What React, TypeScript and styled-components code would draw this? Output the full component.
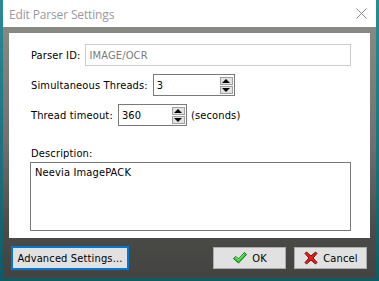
import { createGlobalStyle } from "styled-components";
import styled from "styled-components";

const GlobalStyle = createGlobalStyle`
  html, body {
    margin: 0;
    padding: 0;
  }
  body {
    background: #17707e;
    font-family: "DejaVu Sans Condensed", "DejaVu Sans", sans-serif;
  }
`;

const Desktop = styled.div`
  width: 379px;
  height: 281px;
  box-sizing: border-box;
  padding: 0 3px 3px 3px;
  background: linear-gradient(180deg, #2b8a98 0%, #1a6f7c 60%, #0f5a66 100%);
  overflow: hidden;
`;

const Window = styled.div`
  display: flex;
  flex-direction: column;
  width: 373px;
  height: 278px;
`;

const TitleBar = styled.div`
  height: 27px;
  flex-shrink: 0;
  background: #ffffff;
  display: flex;
  align-items: center;
  justify-content: space-between;
  padding: 0 9px 0 6px;
`;

const Title = styled.span`
  font-family: "Open Sans", "Noto Sans", sans-serif;
  font-size: 12px;
  color: #9a9a9a;
  letter-spacing: -0.15px;
  margin-top: 2px;
`;

const CloseIcon = styled.svg`
  width: 11px;
  height: 11px;
`;

const Frame = styled.div`
  flex: 1;
  display: flex;
  flex-direction: column;
  padding: 6px 6px 0 6px;
  background: linear-gradient(180deg, #898984 0%, #71716d 45%, #4b4b48 80%, #434341 100%);
`;

const Panel = styled.div`
  height: 205px;
  box-sizing: border-box;
  background: #ffffff;
  padding: 11px 19px 0 22px;
  display: flex;
  flex-direction: column;
`;

const FieldRow = styled.div<{ $mt?: number }>`
  display: flex;
  align-items: center;
  gap: 5px;
  height: 22px;
  margin-top: ${({ $mt }) => $mt ?? 0}px;
  font-size: 11px;
  letter-spacing: 0.15px;
  color: #000;
`;

const Label = styled.span`
  white-space: nowrap;
`;

const TextInput = styled.div<{ $disabled?: boolean }>`
  flex: 1;
  height: 22px;
  box-sizing: border-box;
  border: 1px solid ${({ $disabled }) => ($disabled ? "#cccccc" : "#7a7a7a")};
  color: ${({ $disabled }) => ($disabled ? "#7b7b7b" : "#000")};
  display: flex;
  align-items: center;
  padding-left: 3px;
  font-size: 11px;
`;

const SpinBox = styled.div<{ $w: number }>`
  width: ${({ $w }) => $w}px;
  height: 22px;
  box-sizing: border-box;
  border: 1px solid #7a7a7a;
  display: flex;
  align-items: center;
  justify-content: space-between;
  padding: 0 1px 0 3px;
  font-size: 11px;
`;

const SpinButtons = styled.div`
  display: flex;
  flex-direction: column;
  gap: 1px;
`;

const SpinButton = styled.div`
  width: 13px;
  height: 8px;
  box-sizing: border-box;
  background: #e3e3e3;
  border: 1px solid #a0a0a0;
  display: flex;
  align-items: center;
  justify-content: center;
`;

const Arrow = styled.span<{ $up?: boolean }>`
  width: 0;
  height: 0;
  border-left: 4px solid transparent;
  border-right: 4px solid transparent;
  ${({ $up }) =>
    $up ? "border-bottom: 4px solid #000;" : "border-top: 4px solid #000;"}
`;

const Units = styled.span`
  margin-left: -1px;
`;

const DescLabel = styled.div`
  margin-top: 21px;
  font-size: 11px;
  letter-spacing: 0.15px;
  height: 14px;
`;

const TextArea = styled.div`
  margin-top: 1px;
  margin-left: -1px;
  height: 69px;
  box-sizing: border-box;
  border: 1px solid #7a7a7a;
  padding: 3px 4px;
  font-size: 11px;
  letter-spacing: 0.15px;
`;

const Footer = styled.div`
  flex: 1;
  display: flex;
  align-items: center;
  padding: 0 3px 0 2px;
  gap: 8px;
`;

const Button = styled.div<{ $w: number; $focused?: boolean }>`
  width: ${({ $w }) => $w}px;
  height: ${({ $focused }) => ($focused ? 24 : 22)}px;
  box-sizing: border-box;
  background: #e1e1e1;
  border: ${({ $focused }) => ($focused ? "2px solid #0078d7" : "1px solid #adadad")};
  display: flex;
  align-items: center;
  justify-content: center;
  gap: 4px;
  font-size: 11px;
  letter-spacing: 0.15px;
  color: #000;
`;

const Spacer = styled.div`
  flex: 1;
`;

const Glyph = styled.svg`
  width: 16px;
  height: 16px;
`;

function CheckGlyph() {
  return (
    <Glyph viewBox="0 0 16 16">
      <path
        d="M1.5 8.5 L4 6.5 L6.5 9 L12.5 2.5 L14.5 4.5 L6.5 13 Z"
        fill="#2fcf2f"
        stroke="#136b13"
        strokeWidth="1"
        strokeLinejoin="round"
      />
      <path d="M3 8.3 L4 7.6 L6.5 10 L12.5 3.7" fill="none" stroke="#a8f5a8" strokeWidth="0.8" />
    </Glyph>
  );
}

function CrossGlyph() {
  return (
    <Glyph viewBox="0 0 16 16">
      <path
        d="M2 3.5 L3.5 2 L8 6 L12.5 2 L14 3.5 L10 8 L14 12.5 L12.5 14 L8 10 L3.5 14 L2 12.5 L6 8 Z"
        fill="#e8211b"
        stroke="#6b0d0b"
        strokeWidth="1"
        strokeLinejoin="round"
      />
    </Glyph>
  );
}

function Spinner({ value, width }: { value: string; width: number }) {
  return (
    <SpinBox $w={width}>
      <span>{value}</span>
      <SpinButtons>
        <SpinButton>
          <Arrow $up />
        </SpinButton>
        <SpinButton>
          <Arrow />
        </SpinButton>
      </SpinButtons>
    </SpinBox>
  );
}

export default function App() {
  return (
    <>
      <GlobalStyle />
      <Desktop>
        <Window>
          <TitleBar>
            <Title>Edit Parser Settings</Title>
            <CloseIcon viewBox="0 0 11 11">
              <path d="M0.5 0.5 L10.5 10.5 M10.5 0.5 L0.5 10.5" stroke="#8a8a8a" strokeWidth="1" />
            </CloseIcon>
          </TitleBar>
          <Frame>
            <Panel>
              <FieldRow>
                <Label>Parser ID:</Label>
                <TextInput $disabled>IMAGE/OCR</TextInput>
              </FieldRow>
              <FieldRow $mt={8}>
                <Label>Simultaneous Threads:</Label>
                <Spinner value="3" width={82} />
              </FieldRow>
              <FieldRow $mt={8}>
                <Label>Thread timeout:</Label>
                <Spinner value="360" width={69} />
                <Units>(seconds)</Units>
              </FieldRow>
              <DescLabel>Description:</DescLabel>
              <TextArea>Neevia ImagePACK</TextArea>
            </Panel>
            <Footer>
              <Button $w={118} $focused>
                Advanced Settings...
              </Button>
              <Spacer />
              <Button $w={73}>
                <CheckGlyph />
                OK
              </Button>
              <Button $w={73}>
                <CrossGlyph />
                Cancel
              </Button>
            </Footer>
          </Frame>
        </Window>
      </Desktop>
    </>
  );
}
